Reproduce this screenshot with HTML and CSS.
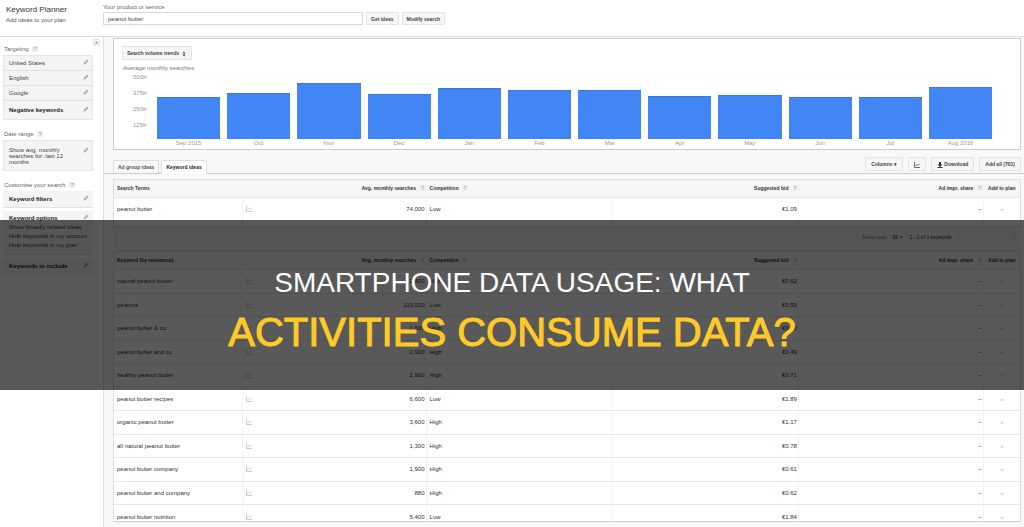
FILE: index.html
```
<!DOCTYPE html>
<html lang="en">
<head>
    <meta charset="UTF-8">
    <meta name="viewport" content="width=device-width, initial-scale=1.0">
    <title>Keyword Planner</title>
    <link rel="stylesheet" href="styles.css">
</head>
<body>
    <svg class="sprite" aria-hidden="true">
        <symbol id="pencil" viewBox="0 0 12 12"><path d="M1 11l1-4 6-6 3 3-6 6z" fill="#aaa"/><path d="M3 8l5-5" stroke="#eee"/></symbol>
        <symbol id="trend" viewBox="0 0 12 12"><path d="M1 0v11h11M3 8l3-3 2 2 4-4" fill="none" stroke="currentColor" stroke-width="1.5"/></symbol>
    </svg>

    <header class="header">
        <div class="brand">
            <h1>Keyword Planner</h1>
            <p>Add ideas to your plan</p>
        </div>
        <form class="search">
            <label for="product">Your product or service</label>
            <div class="search-row">
                <input type="text" id="product" value="peanut butter">
                <button type="button">Get ideas</button>
                <button type="button">Modify search</button>
            </div>
        </form>
    </header>

    <div class="layout">
        <aside class="sidebar">
            <button class="collapse" type="button">«</button>
            <h2>Targeting <span class="help">?</span></h2>
            <div class="group">
                <div class="item">United States <svg><use href="#pencil"/></svg></div>
                <div class="item">English <svg><use href="#pencil"/></svg></div>
                <div class="item">Google <svg><use href="#pencil"/></svg></div>
                <div class="item tall"><b>Negative keywords</b> <svg><use href="#pencil"/></svg></div>
            </div>
            <h2>Date range <span class="help">?</span></h2>
            <div class="group">
                <div class="item range"><span>Show avg. monthly<br>searches for: last 12<br>months</span> <svg><use href="#pencil"/></svg></div>
            </div>
            <h2>Customise your search <span class="help">?</span></h2>
            <div class="group spaced">
                <div class="item"><b>Keyword filters</b> <svg><use href="#pencil"/></svg></div>
                <div class="item options">
                    <div><b>Keyword options</b><ul><li>Show broadly related ideas</li><li>Hide keywords in my account</li><li>Hide keywords in my plan</li></ul></div>
                    <svg><use href="#pencil"/></svg>
                </div>
                <div class="item"><b>Keywords to include</b> <svg><use href="#pencil"/></svg></div>
            </div>
        </aside>

        <main class="main">
            <section class="chart">
                <button class="metric" type="button">Search volume trends <svg viewBox="0 0 8 12"><path d="M1 5l3-4 3 4zM1 7l3 4 3-4z" fill="#444"/></svg></button>
                <h3>Average monthly searches</h3>
                <div class="plot">
                    <div class="axis"><span>500K</span><span>375K</span><span>250K</span><span>125K</span></div>
                    <div class="bars">
                        <div class="bar" style="height: 68%"></div>
                        <div class="bar" style="height: 74%"></div>
                        <div class="bar" style="height: 90%"></div>
                        <div class="bar" style="height: 72%"></div>
                        <div class="bar" style="height: 82%"></div>
                        <div class="bar" style="height: 79%"></div>
                        <div class="bar" style="height: 79%"></div>
                        <div class="bar" style="height: 69%"></div>
                        <div class="bar" style="height: 71%"></div>
                        <div class="bar" style="height: 68%"></div>
                        <div class="bar" style="height: 68%"></div>
                        <div class="bar" style="height: 84%"></div>
                    </div>
                </div>
                <div class="months">
                    <span>Sep 2015</span><span>Oct</span><span>Nov</span><span>Dec</span><span>Jan</span><span>Feb</span><span>Mar</span><span>Apr</span><span>May</span><span>Jun</span><span>Jul</span><span>Aug 2016</span>
                </div>
            </section>

            <div class="toolbar">
                <nav class="tabs">
                    <a href="#groups">Ad group ideas</a>
                    <a href="#keywords" class="active">Keyword ideas</a>
                </nav>
                <div class="actions">
                    <button type="button">Columns <span class="caret">▾</span></button>
                    <button type="button" aria-label="Trends"><svg><use href="#trend"/></svg></button>
                    <button type="button"><svg viewBox="0 0 12 12"><path d="M4 0h4v5h3l-5 5-5-5h3zM1 10h10v2H1z" fill="#333"/></svg> Download</button>
                    <button type="button">Add all (701)</button>
                </div>
            </div>

            <table class="grid">
                <colgroup><col class="c-term"><col class="c-icon"><col class="c-avg"><col class="c-comp"><col class="c-bid"><col class="c-share"><col class="c-add"></colgroup>
                <thead>
                    <tr><th>Search Terms</th><th></th><th class="num">Avg. monthly searches <span class="help">?</span></th><th>Competition <span class="help">?</span></th><th class="num">Suggested bid <span class="help">?</span></th><th class="num">Ad impr. share <span class="help">?</span></th><th class="add">Add to plan</th></tr>
                </thead>
                <tbody class="single">
                    <tr><td>peanut butter</td><td><svg><use href="#trend"/></svg></td><td class="num">74,000</td><td>Low</td><td class="num">€1.09</td><td class="num">–</td><td class="add">»</td></tr>
                </tbody>
            </table>

            <div class="pager">
                <label for="rows">Show rows</label>
                <select id="rows"><option>50</option></select>
                <span class="caret">▾</span>
                <span class="count">1 - 1 of 1 keywords</span>
                <span class="steps"><span>|‹</span><span>‹</span><span>›</span><span>›|</span></span>
            </div>

            <table class="grid ideas">
                <colgroup><col class="c-term"><col class="c-icon"><col class="c-avg"><col class="c-comp"><col class="c-bid"><col class="c-share"><col class="c-add"></colgroup>
                <thead>
                    <tr><th>Keyword (by relevance)</th><th></th><th class="num">Avg. monthly searches <span class="help">?</span></th><th>Competition <span class="help">?</span></th><th class="num">Suggested bid <span class="help">?</span></th><th class="num">Ad impr. share <span class="help">?</span></th><th class="add">Add to plan</th></tr>
                </thead>
                <tbody>
                    <tr><td>natural peanut butter</td><td><svg><use href="#trend"/></svg></td><td class="num">2,400</td><td>High</td><td class="num">€0.62</td><td class="num">–</td><td class="add">»</td></tr>
                    <tr><td>peanuts</td><td><svg><use href="#trend"/></svg></td><td class="num">110,000</td><td>Low</td><td class="num">€0.59</td><td class="num">–</td><td class="add">»</td></tr>
                    <tr><td>peanut butter &amp; co</td><td><svg><use href="#trend"/></svg></td><td class="num">1,600</td><td>High</td><td class="num">€0.50</td><td class="num">–</td><td class="add">»</td></tr>
                    <tr><td>peanut butter and co</td><td><svg><use href="#trend"/></svg></td><td class="num">2,900</td><td>High</td><td class="num">€0.49</td><td class="num">–</td><td class="add">»</td></tr>
                    <tr><td>healthy peanut butter</td><td><svg><use href="#trend"/></svg></td><td class="num">2,900</td><td>High</td><td class="num">€0.71</td><td class="num">–</td><td class="add">»</td></tr>
                    <tr><td>peanut butter recipes</td><td><svg><use href="#trend"/></svg></td><td class="num">6,600</td><td>Low</td><td class="num">€1.89</td><td class="num">–</td><td class="add">»</td></tr>
                    <tr><td>organic peanut butter</td><td><svg><use href="#trend"/></svg></td><td class="num">3,600</td><td>High</td><td class="num">€1.17</td><td class="num">–</td><td class="add">»</td></tr>
                    <tr><td>all natural peanut butter</td><td><svg><use href="#trend"/></svg></td><td class="num">1,300</td><td>High</td><td class="num">€0.78</td><td class="num">–</td><td class="add">»</td></tr>
                    <tr><td>peanut butter company</td><td><svg><use href="#trend"/></svg></td><td class="num">1,900</td><td>High</td><td class="num">€0.61</td><td class="num">–</td><td class="add">»</td></tr>
                    <tr><td>peanut butter and company</td><td><svg><use href="#trend"/></svg></td><td class="num">880</td><td>High</td><td class="num">€0.62</td><td class="num">–</td><td class="add">»</td></tr>
                    <tr class="last"><td>peanut butter nutrition</td><td><svg><use href="#trend"/></svg></td><td class="num">5,400</td><td>Low</td><td class="num">€1.84</td><td class="num">–</td><td class="add">»</td></tr>
                </tbody>
            </table>
        </main>
    </div>

    <div class="banner">
        <p class="banner-top">SMARTPHONE DATA USAGE: WHAT</p>
        <p class="banner-main">ACTIVITIES CONSUME DATA?</p>
    </div>
</body>
</html>
```
FILE: styles.css
```
* {
    box-sizing: border-box;
}

body {
    font-family: "Liberation Sans", Arial, sans-serif;
    font-size: 6px;
    line-height: 8px;
    color: #444;
    background: #fff;
    margin: 0;
    min-height: 100vh;
    position: relative;
    display: flex;
    flex-direction: column;
}

h1, h2, h3, p, ul {
    margin: 0;
    padding: 0;
    font-weight: normal;
    list-style: none;
}

button, input, select {
    font: inherit;
    color: inherit;
}

button {
    font-size: 5px;
    font-weight: bold;
    background: #f6f6f6;
    border: 1px solid #e4e4e4;
    border-radius: 1px;
    padding: 0 4px;
    white-space: nowrap;
}

svg {
    width: 6px;
    height: 6px;
    flex-shrink: 0;
    vertical-align: middle;
}

.sprite {
    position: absolute;
    width: 0;
    height: 0;
}

/* header */
.header {
    display: flex;
    height: 37px;
    border-bottom: 1px solid #ddd;
}

.brand {
    width: 103px;
    padding: 6px 0 0 6px;
}

.brand h1 {
    font-size: 8px;
    color: #333;
}

.brand p {
    margin-top: 2px;
    color: #555;
}

.search {
    flex: 1;
    padding-top: 3px;
    color: #666;
}

.search label {
    display: block;
}

.search-row {
    display: flex;
    gap: 3px;
    margin-top: 1px;
    height: 13px;
    color: #444;
}

.search-row input {
    width: 260px;
    padding: 0 4px;
    border: 1px solid #d8d8d8;
    background: #fff;
}

/* sidebar */
.layout {
    flex: 1;
    display: flex;
}

.sidebar {
    position: relative;
    width: 104px;
    padding: 8px 10px 0 3px;
    border-right: 1px solid #ddd;
}

.sidebar h2 {
    font-size: 6px;
    padding-left: 1px;
    margin-bottom: 2px;
    color: #666;
}

.collapse {
    position: absolute;
    top: 2px;
    right: 3px;
    width: 7px;
    height: 7px;
    padding: 0;
    line-height: 5px;
    color: #888;
}

.help {
    display: inline-block;
    width: 6px;
    line-height: 6px;
    margin-left: 2px;
    font-size: 5px;
    font-weight: normal;
    text-align: center;
    color: #999;
    background: #eee;
}

.group {
    margin-bottom: 10px;
    border: 1px solid #e6e6e6;
}

.item {
    display: flex;
    justify-content: space-between;
    padding: 3px 3px 3px 5px;
    background: #f4f4f4;
    border-bottom: 1px solid #e2e2e2;
}

.item:last-child {
    border-bottom: 0;
}

.item.tall {
    padding-top: 5px;
    padding-bottom: 5px;
}

.item b {
    color: #222;
}

.item.range {
    line-height: 6px;
    padding-top: 6px;
    padding-bottom: 5px;
}

.spaced {
    display: flex;
    flex-direction: column;
    gap: 3px;
    border: 0;
    margin-bottom: 0;
}

.spaced .item {
    padding: 4px 4px 4px 6px;
}

.spaced .options {
    padding-top: 3px;
    padding-bottom: 4px;
}

.options div {
    min-width: 0;
}

.options ul {
    white-space: nowrap;
    line-height: 9px;
    margin-top: 1px;
}

/* chart */
.main {
    flex: 1;
    min-width: 0;
    padding: 1px 3px 0 9px;
    background: #f8f8f8;
}

.chart {
    background: #fff;
    border: 1px solid #ccc;
    padding: 7px 28px 2px 8px;
}

.chart h3 {
    font-size: 6px;
    color: #777;
    margin: 4px 0 0 1px;
}

.metric {
    display: block;
    height: 14px;
}

.plot {
    display: flex;
    height: 67px;
}

.axis {
    width: 35px;
    padding: 1px 10px 0 0;
    text-align: right;
    color: #999;
    display: flex;
    flex-direction: column;
    gap: 8px;
}

.bars {
    flex: 1;
    display: flex;
    align-items: flex-end;
    gap: 7px;
    margin-top: 5px;
    background: linear-gradient(#fafafa 1px, transparent 1px) 0 0 / 100% 16px;
}

.bar {
    flex: 1;
    background: #4285f4;
    border-top: 1px solid #3c78d8;
}

.months {
    display: flex;
    gap: 7px;
    padding-left: 35px;
    color: #999;
    text-align: center;
}

.months span {
    flex: 1;
}

/* tabs and actions */
.toolbar {
    display: flex;
    justify-content: space-between;
    align-items: flex-end;
    height: 24px;
    margin: 0 -3px 5px -9px;
    padding: 0 3px 0 9px;
    border-bottom: 1px solid #ccc;
}

.tabs {
    display: flex;
    gap: 2px;
}

.tabs a {
    padding: 2px 4px;
    height: 13px;
    font-size: 5px;
    font-weight: bold;
    color: #555;
    text-decoration: none;
    border: 1px solid #ddd;
    border-bottom: 0;
}

.tabs .active {
    background: #fff;
    color: #222;
    height: 14px;
    margin-bottom: -1px;
}

.actions {
    display: flex;
    gap: 5px;
    margin-bottom: 2px;
}

.actions button {
    height: 14px;
    padding: 0 5px;
}

/* tables */
.grid {
    width: 100%;
    table-layout: fixed;
    border-collapse: separate;
    border-spacing: 0;
    border: 1px solid #ddd;
    background: #fff;
}

.c-term { width: 14.2%; }
.c-icon { width: 2%; }
.c-avg { width: 18.3%; }
.c-comp { width: 20.5%; }
.c-bid { width: 20.6%; }
.c-share { width: 20.4%; }
.c-add { width: 4%; }

.grid th, .grid td {
    padding: 0 2px 0 3px;
    text-align: left;
    white-space: nowrap;
    border-right: 1px solid #f4f4f4;
}

.grid th {
    height: 18px;
    padding-bottom: 1px;
    font-size: 5px;
    color: #333;
    background: #f5f5f5;
    border-right: 0;
    border-bottom: 1px solid #e8e8e8;
}

.grid td {
    height: 23px;
    padding-bottom: 1px;
    border-bottom: 1px solid #e8e8e8;
    color: #333;
}

.grid tr:nth-child(odd) td {
    height: 24px;
}

.grid td:nth-child(2) {
    color: #bbb;
    border-right: 0;
}

.grid .num {
    text-align: right;
    padding-right: 1px;
}

.grid .add {
    text-align: center;
    padding-left: 0;
    padding-right: 0;
}

.grid td.add {
    color: #bbb;
    border-right: 0;
}

.grid .single tr td {
    height: 28px;
    padding-bottom: 6px;
    border-bottom: 0;
}

.grid tr.last td {
    height: 17px;
    padding-bottom: 0;
    vertical-align: bottom;
    border-bottom-color: #ccc;
}

.ideas {
    border-bottom: 0;
}

.pager {
    display: flex;
    align-items: center;
    justify-content: flex-end;
    gap: 6px;
    height: 24px;
    padding: 0 6px 4px 0;
    background: #f1f1f1;
    font-size: 5px;
    color: #777;
}

.pager select {
    appearance: none;
    border: 0;
    padding: 0;
    background: none;
    color: #222;
}

.pager .caret {
    margin-left: -4px;
}

.pager .count {
    color: #333;
}

.steps {
    display: flex;
    gap: 16px;
    color: #bbb;
}

/* title strip over the page */
.banner {
    position: absolute;
    top: 220px;
    left: 0;
    right: 0;
    padding: 43px 0 34px;
    text-align: center;
    background: rgba(0, 0, 0, 0.65);
}

.banner-top {
    font-size: 28px;
    line-height: 40px;
    color: #fff;
}

.banner-main {
    margin-top: 6px;
    font-size: 40px;
    line-height: 47px;
    color: #ffca28;
    -webkit-text-stroke: 1px #ffca28;
}
```
